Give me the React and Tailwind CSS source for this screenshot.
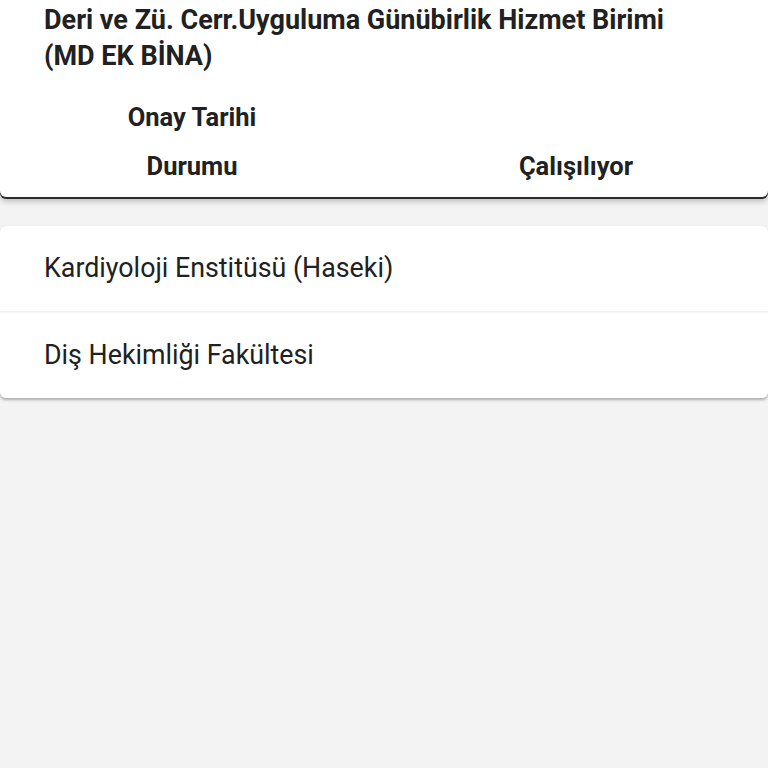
export default function App() {
  return (
    <div className="min-h-[768px] w-[768px] bg-[#f3f3f3] text-[#212121]" style={{ fontFamily: 'Roboto, "Noto Sans", sans-serif' }}>
      <div className="bg-white rounded-b-md shadow-[0_2px_0_#2a2a2a,0_4px_6px_rgba(0,0,0,0.25)]">
        <div className="px-[44px] pt-[2px] text-[27px] font-bold leading-[36px]">
          <div>Deri ve Zü. Cerr.Uyguluma Günübirlik Hizmet Birimi</div>
          <div>(MD EK BİNA)</div>
        </div>
        <div className="grid grid-cols-2 text-[25.5px] font-bold leading-[49px] pt-[19px] pb-[6px]">
          <div className="text-center">Onay Tarihi</div>
          <div></div>
          <div className="text-center">Durumu</div>
          <div className="text-center">Çalışılıyor</div>
        </div>
      </div>
      <div className="mt-[29px] bg-white rounded-md shadow-[0_2px_3px_rgba(0,0,0,0.3)]">
        <div className="h-[86px] flex items-center px-[44px] text-[26.8px] border-b border-[#f0f0f0] shadow-[0_1px_2px_rgba(0,0,0,0.04)]">
          Kardiyoloji Enstitüsü (Haseki)
        </div>
        <div className="h-[86px] flex items-center px-[44px] text-[26.8px]">
          Diş Hekimliği Fakültesi
        </div>
      </div>
    </div>
  );
}
